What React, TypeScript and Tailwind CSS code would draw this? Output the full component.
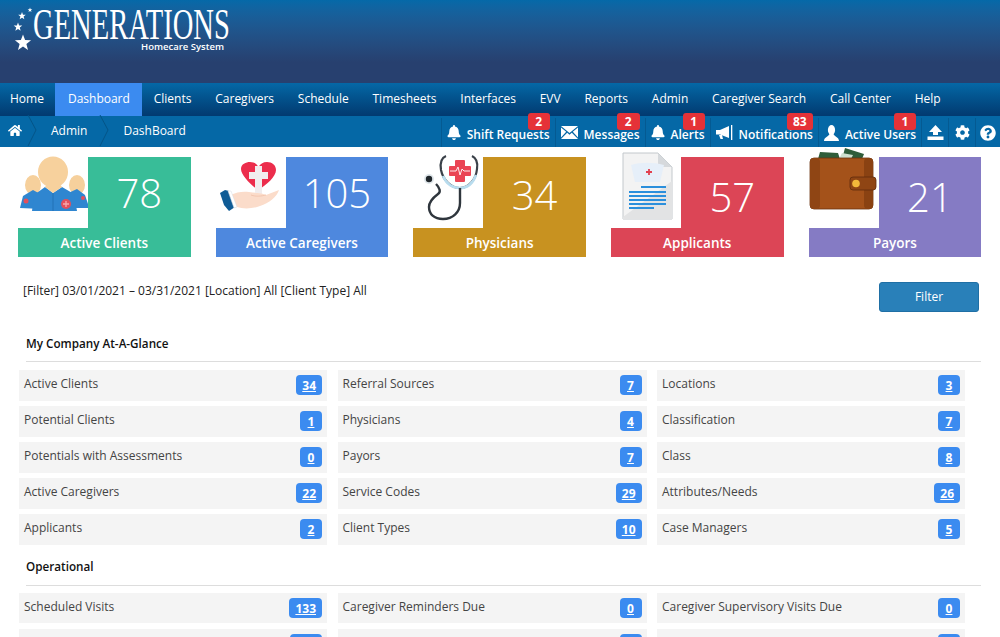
import React from 'react';
import { FaBell, FaCog, FaHome, FaQuestionCircle } from 'react-icons/fa';

const NAV = ['Home', 'Dashboard', 'Clients', 'Caregivers', 'Schedule', 'Timesheets', 'Interfaces', 'EVV', 'Reports', 'Admin', 'Caregiver Search', 'Call Center', 'Help'];

type Row = [string, string, boolean?];

const GLANCE: Row[][] = [
  [['Active Clients', '34'], ['Referral Sources', '7'], ['Locations', '3']],
  [['Potential Clients', '1'], ['Physicians', '4'], ['Classification', '7']],
  [['Potentials with Assessments', '0'], ['Payors', '7'], ['Class', '8']],
  [['Active Caregivers', '22'], ['Service Codes', '29'], ['Attributes/Needs', '26']],
  [['Applicants', '2'], ['Client Types', '10'], ['Case Managers', '5']],
];

// second row is cut by the window, only the top of its badges shows
const OPERATIONAL: Row[][] = [
  [['Scheduled Visits', '133'], ['Caregiver Reminders Due', '0'], ['Caregiver Supervisory Visits Due', '0']],
  [['', '', true], ['', ''], ['', '']],
];

function Star({ x, y, r }: { x: number; y: number; r: number }) {
  const pts = Array.from({ length: 10 }, (_, i) => {
    const a = -Math.PI / 2 + (i * Math.PI) / 5;
    const d = i % 2 === 0 ? r : r * 0.42;
    return `${x + d * Math.cos(a)},${y + d * Math.sin(a)}`;
  }).join(' ');
  return <polygon points={pts} fill="#fff" />;
}

function EnvelopeIcon() {
  return (
    <svg viewBox="0 0 17 13" className="w-[17px] h-[13px]">
      <path d="M0 0H17L8.5 7Z M0 1.5V11.5L5.2 5.8Z M17 1.5V11.5L11.8 5.8Z M0 13H17L10.8 6.8L8.5 8.8L6.2 6.8Z" fill="#fff" />
    </svg>
  );
}

function MegaphoneIcon() {
  return (
    <svg viewBox="0 0 17 15" className="w-[17px] h-[15px]">
      <path d="M0 5H4L13 1V13L4 9.500H0Z" fill="#fff" />
      <path d="M3 10H6L7 14H4.500Z" fill="#fff" />
      <rect x="15" y="0" width="1.300" height="15" fill="#fff" />
    </svg>
  );
}

function UserIcon() {
  return (
    <svg viewBox="0 0 15 16" className="w-[15px] h-[16px]">
      <ellipse cx="7.500" cy="5" rx="3.600" ry="5" fill="#fff" />
      <path d="M0 16C0 12 5 11.500 5.500 9H9.500C10 11.500 15 12 15 16Z" fill="#fff" />
    </svg>
  );
}

function UploadIcon() {
  return (
    <svg viewBox="0 0 17 15" className="w-[17px] h-[15px]">
      <path d="M8.5 0L15 7H11V10H6V7H2Z" fill="#fff" />
      <rect x="0.5" y="11.5" width="16" height="3.5" fill="#fff" />
    </svg>
  );
}

function ClientsIcon() {
  return (
    <svg viewBox="0 0 70 71" className="w-[70px] h-[71px] overflow-visible">
      <ellipse cx="15" cy="28" rx="8" ry="10" fill="#f6d09c" />
      <ellipse cx="59" cy="28" rx="8" ry="10" fill="#f6d09c" />
      <path d="M2 51L5 39L15 33L24 38V52Z" fill="#2f86d0" />
      <path d="M46 38L59 32L67 38L70 47V51H46Z" fill="#2f86d0" />
      <ellipse cx="35" cy="15" rx="15" ry="15.5" fill="#f7d19d" />
      <path d="M14 54L16 38L27 30L35 36L44 30L56 37L59 54Z" fill="#2f86d0" />
      <path d="M27 30L35 36L44 30L41 26H30Z" fill="#f7d19d" />
      <path d="M35 36V54" stroke="#1f6cb0" strokeWidth="0.8" />
      <circle cx="48" cy="47" r="5" fill="#e2505c" />
      <path d="M48 44V50M45 47H51" stroke="#f7a8ac" strokeWidth="1.3" />
      <circle cx="8" cy="44" r="2.5" fill="#e2505c" />
      <circle cx="65" cy="41" r="2" fill="#e2505c" />
    </svg>
  );
}

function CaregiversIcon() {
  return (
    <svg viewBox="0 0 70 71" className="w-[70px] h-[71px] overflow-visible">
      <path d="M42 33C34 27 25 18 25 12C25 7 30 5 34 5C38 5 41 7 42.500 10C44 7 47 5 51 5C56 5 60 8 60 13C60 19 51 28 42 33Z" fill="#ec2d4c" />
      <path d="M39 9H46V15H52V22H46V38H39V22H33V15H39Z" fill="#f1edee" />
      <path d="M14 38C21 35 27 34 33 35C39 36 47 36 50 38L63 33C61 40 53 46 44 49C36 52 27 52 21 50L14 52Z" fill="#fbdcca" />
      <path d="M35 38C40 40 46 39 50 38" stroke="#f0c0a8" strokeWidth="0.8" fill="none" />
      <path d="M4 36L9 33L13 34L19 50L13 54L8 48Z" fill="#0f5c96" />
      <path d="M12 34L15 34L21 50L18 51Z" fill="#fff" stroke="#d5dde4" strokeWidth="0.5" />
    </svg>
  );
}

function PhysiciansIcon() {
  return (
    <svg viewBox="0 0 70 71" className="w-[70px] h-[71px] overflow-visible">
      <path d="M33 -1C28 1 27 7 28 13C30 23 38 31 47 31C56 31 63 22 64 12C65 6 63 1 59 -1" fill="none" stroke="#3a4149" strokeWidth="2.2" />
      <path d="M30 19C33 26 39 31 47 31C55 31 60 26 63 18" fill="none" stroke="#b8dcee" strokeWidth="2.6" />
      <path d="M47 31V46C47 55 40 62 30 62C21 62 16 57 16 50C16 44 21 40 25 37C28 35 27 31 23 27" fill="none" stroke="#2f363d" strokeWidth="2.4" />
      <circle cx="16" cy="22" r="5" fill="#dfe6ea" />
      <circle cx="16" cy="22" r="3.200" fill="#20262b" />
      <path d="M43 4H51V10H57V18H51V24H43V18H37V10H43Z" fill="#ea4454" stroke="#ea4454" strokeWidth="2" strokeLinejoin="round" />
      <path d="M37 14H43L45 10L47 18L49 12L51 14H57" fill="none" stroke="#fff" strokeWidth="0.9" />
    </svg>
  );
}

function ApplicantsIcon() {
  return (
    <svg viewBox="0 0 70 71" className="w-[70px] h-[71px] overflow-visible">
      <path d="M12 -4H47L61 10V62H12Z" fill="#f3f3f3" stroke="#c3c8cc" strokeWidth="1" />
      <path d="M47 -4V10H61Z" fill="#d6d9dc" />
      <path d="M12 60L61 24V62H12Z" fill="#e2e3e4" />
      <path d="M20 8C30 5 42 5 53 8L49 25H24Z" fill="#e6eff9" />
      <path d="M35 15H41M38 12V18" stroke="#e2404f" strokeWidth="1.800" />
      <path d="M30 30H55M18 35H55M18 39H55M18 43H55M18 47H55M18 51H43" stroke="#2b8fdc" strokeWidth="2" />
    </svg>
  );
}

function PayorsIcon() {
  return (
    <svg viewBox="0 0 70 71" className="w-[70px] h-[71px] overflow-visible">
      <path d="M9 2L11 -5L29 -4L31 2Z" fill="#2f5d3a" />
      <path d="M33 2L36 -9L55 -3L53 2Z" fill="#2f5d3a" />
      <path d="M30 2L33 -4L44 -2L42 2Z" fill="#cfe0cf" />
      <rect x="1" y="1" width="63" height="51" rx="4" fill="#a4521a" stroke="#6a3210" strokeWidth="0.8" />
      <rect x="1" y="1" width="10" height="51" rx="4" fill="#8f4514" />
      <rect x="55" y="1" width="9" height="51" rx="4" fill="#8a4212" />
      <rect x="41" y="20" width="26" height="13" rx="3" fill="#8f4514" stroke="#5f2c0c" strokeWidth="0.8" />
      <circle cx="47" cy="26.500" r="3.800" fill="#f2b83a" />
    </svg>
  );
}

const CARDS = [
  { label: 'Active Clients', value: '78', color: 'bg-[#38bd98]', nudge: 'pt-[0px]', icon: <ClientsIcon /> },
  { label: 'Active Caregivers', value: '105', color: 'bg-[#4e88de]', nudge: 'pt-[0px]', icon: <CaregiversIcon /> },
  { label: 'Physicians', value: '34', color: 'bg-[#c89220]', nudge: 'pt-[5px]', icon: <PhysiciansIcon /> },
  { label: 'Applicants', value: '57', color: 'bg-[#dc4556]', nudge: 'pt-[8px]', icon: <ApplicantsIcon /> },
  { label: 'Payors', value: '21', color: 'bg-[#857bc4]', nudge: 'pt-[8px]', icon: <PayorsIcon /> },
];

const TOOLS = [
  { label: 'Shift Requests', icon: <FaBell className="w-[14px] h-[15px]" />, badge: '2', badgeW: 'w-[22px]' },
  { label: 'Messages', icon: <EnvelopeIcon />, badge: '2', badgeW: 'w-[23px]' },
  { label: 'Alerts', icon: <FaBell className="w-[14px] h-[15px]" />, badge: '1', badgeW: 'w-[22px]' },
  { label: 'Notifications', icon: <MegaphoneIcon />, badge: '83', badgeW: 'w-[26px]' },
  { label: 'Active Users', icon: <UserIcon />, badge: '1', badgeW: 'w-[22px]' },
];

function RowGrid({ rows }: { rows: Row[][] }) {
  return (
    <div className="grid grid-cols-[308px_309px_308px] gap-x-[10.500px] gap-y-[5.400px] ml-[19px]">
      {rows.flat().map(([label, count, wide], i) => (
        <div key={i} className="h-[30.600px] bg-[#f4f4f4] flex items-start justify-between pl-[5px] pr-[5px] text-[12px] text-[#444]">
          <span className="mt-[5px] leading-[17px]">{label}</span>
          <a className={wide ? 'mt-[5px] h-[20px] w-[32px] rounded-[4px] bg-[#3b8bf0]' : 'mt-[5px] h-[20px] px-[6px] min-w-[22px] rounded-[4px] bg-[#3b8bf0] text-white font-bold underline leading-[21px] text-center'}>
            {count}
          </a>
        </div>
      ))}
    </div>
  );
}

export default function App() {
  return (
    <div className="w-[1000px] h-[637px] overflow-hidden bg-white font-['Open_Sans',sans-serif]">
      <header className="h-[83px] bg-gradient-to-b from-[#0569a8] to-[#27406f] to-75% pl-[12px] pt-[6px] text-white">
        <div className="flex">
          <svg viewBox="0 0 22 46" className="w-[22px] h-[46px] shrink-0">
            <Star x={10} y={10} r={4} />
            <Star x={18} y={4} r={2.500} />
            <Star x={6} y={21} r={4.500} />
            <Star x={11} y={37} r={8.500} />
          </svg>
          <div className="ml-[-1px]">
            <div className="h-[34px] w-[196px] font-['Liberation_Serif',serif] text-[45px] leading-[36px] whitespace-nowrap origin-left scale-x-[0.635]">
              GENERATIONS
            </div>
            <div className="ml-[108px] mt-[1px] text-[9.500px] leading-[12px] font-semibold whitespace-nowrap">Homecare System</div>
          </div>
        </div>
      </header>

      <nav className="h-[33px] flex bg-gradient-to-b from-[#0568a6] to-[#023a70] text-white text-[12px]">
        {NAV.map((item) => (
          <a
            key={item}
            className={
              item === 'Dashboard'
                ? 'h-full pl-[13px] pr-[12px] leading-[31px] whitespace-nowrap bg-[#3b8bf0]'
                : item === 'Home'
                  ? 'h-full pl-[10px] pr-[11px] leading-[31px] whitespace-nowrap'
                  : 'h-full px-[11.900px] leading-[31px] whitespace-nowrap'
            }
          >
            {item}
          </a>
        ))}
      </nav>

      <div className="h-[31px] bg-[#0568a6] text-white flex items-stretch justify-between text-[12px]">
        <div className="flex items-center pl-[8px] pb-[2px]">
          <FaHome className="w-[14px] h-[13px]" />
          <svg viewBox="0 0 10 31" className="w-[10px] h-[31px] ml-[5px]">
            <path d="M1 0L9 15L1 31" fill="none" stroke="#045488" />
          </svg>
          <span className="ml-[14px]">Admin</span>
          <svg viewBox="0 0 10 31" className="w-[10px] h-[31px] ml-[12px]">
            <path d="M1 0L9 15L1 31" fill="none" stroke="#045488" />
          </svg>
          <span className="ml-[14px]">DashBoard</span>
        </div>
        <div className="flex items-end text-[12px] font-semibold pr-[4px]">
          {TOOLS.map((tool) => (
            <div key={tool.label} className="relative h-[29px] flex items-center gap-[6px] pl-[5px] pr-[5px] border-l border-[#045a92]">
              {tool.icon}
              <span className="whitespace-nowrap pt-[4px]">{tool.label}</span>
              <span className={`absolute right-[5px] top-[-5px] h-[17px] ${tool.badgeW} rounded-[3px] bg-[#e53238] text-center text-[12px] leading-[17px] font-bold`}>
                {tool.badge}
              </span>
            </div>
          ))}
          <div className="h-[29px] w-[27px] flex items-center justify-center border-l border-[#045a92]"><UploadIcon /></div>
          <div className="h-[29px] w-[27px] flex items-center justify-center border-l border-[#045a92]"><FaCog className="w-[15px] h-[15px]" /></div>
          <div className="h-[29px] w-[21px] flex items-center justify-end border-l border-[#045a92]"><FaQuestionCircle className="w-[16px] h-[16px]" /></div>
        </div>
      </div>

      <section className="flex gap-[25px] pl-[18px] pt-[10px]">
        {CARDS.map((card) => (
          <div key={card.label} className="w-[172.650px]">
            <div className="flex h-[71px]">
              <div className="w-[70px] shrink-0">{card.icon}</div>
              <div className={`flex-1 flex items-center justify-center text-white text-[40px] font-light leading-none ${card.color} ${card.nudge}`}>
                {card.value}
              </div>
            </div>
            <div className={`h-[29px] pt-[1px] flex items-center justify-center text-white text-[13.500px] font-semibold ${card.color}`}>
              {card.label}
            </div>
          </div>
        ))}
      </section>

      <div className="flex justify-between items-start mt-[25px] pl-[23px] pr-[21px]">
        <p className="text-[12px] leading-[17px] text-[#222]">[Filter] 03/01/2021 – 03/31/2021 [Location] All [Client Type] All</p>
        <button className="w-[100px] h-[30px] rounded-[3px] bg-[#2980b9] border border-[#1f6fa5] text-white text-[12px] font-medium">Filter</button>
      </div>

      <h3 className="mt-[23px] ml-[26px] text-[11.700px] leading-[17px] font-semibold text-[#111]">My Company At-A-Glance</h3>
      <hr className="mt-[9px] ml-[26px] mr-[19px] border-[#ddd]" />
      <div className="mt-[8px]">
        <RowGrid rows={GLANCE} />
      </div>

      <h3 className="mt-[13px] ml-[26px] text-[11.700px] leading-[17px] font-semibold text-[#111]">Operational</h3>
      <hr className="mt-[10px] ml-[26px] mr-[19px] border-[#ddd]" />
      <div className="mt-[7px]">
        <RowGrid rows={OPERATIONAL} />
      </div>
    </div>
  );
}
